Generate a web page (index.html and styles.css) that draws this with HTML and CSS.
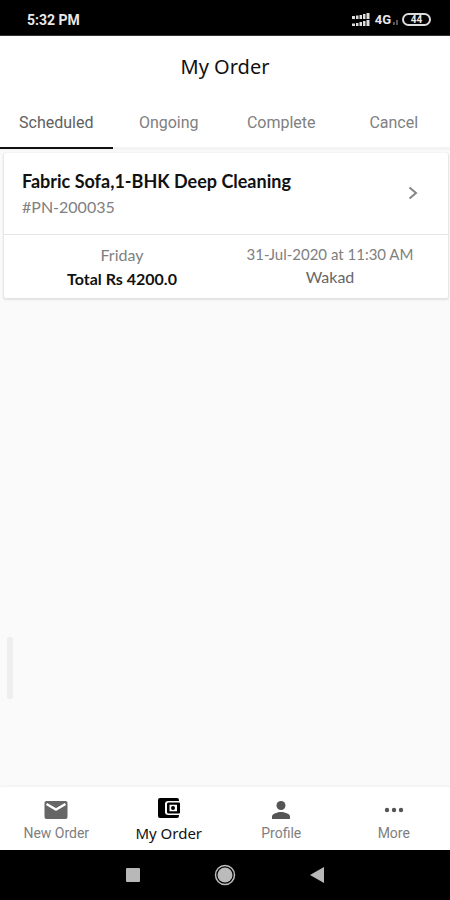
FILE: index.html
```html
<!DOCTYPE html>
<html lang="en">
<head>
<meta charset="utf-8">
<meta name="viewport" content="width=device-width, initial-scale=1">
<title>My Order</title>
<link rel="stylesheet" href="styles.css">
</head>
<body>
<div class="status">
  <span class="clock">5:32 PM</span>
  <div class="indicators">
    <svg class="signal" width="18" height="14" viewBox="0 0 18 14" fill="#ddd" aria-hidden="true">
      <path d="M0 3h3v3H0zM4 2.500h2.500v3.500H4zM7.500 2h2.500v4H7.500zM11 1h2.500v5H11zM14.500 0h3v6h-3zM0 10.500h3v2.500H0zM4 10h2.500v3H4zM7.500 9h2.500v4H7.500zM11 8h2.500v5H11zM14.500 7h3v6h-3z"/>
    </svg>
    <span class="network">4G</span>
    <svg class="dot" width="5" height="6" viewBox="0 0 5 6" fill="#555" aria-hidden="true"><path d="M0 3h2v3H0zM3 1h2v5H3z"/></svg>
    <span class="battery">44</span>
  </div>
</div>
<header class="header">
  <h1 class="title">My Order</h1>
  <nav class="tabs">
    <a class="tab tab-active" href="#scheduled">Scheduled</a>
    <a class="tab" href="#ongoing">Ongoing</a>
    <a class="tab" href="#complete">Complete</a>
    <a class="tab" href="#cancel">Cancel</a>
  </nav>
</header>
<main class="content">
  <article class="card">
    <a class="card-head" href="#order">
      <div>
        <h2 class="service">Fabric Sofa,1-BHK Deep Cleaning</h2>
        <p class="number">#PN-200035</p>
      </div>
      <svg width="10" height="16" viewBox="0 0 10 16" fill="none" stroke="#858585" stroke-width="2" aria-hidden="true"><path d="M1.500 1.500 8 7l-6.500 5.500"/></svg>
    </a>
    <div class="card-info">
      <div class="info">
        <p class="day">Friday</p>
        <p class="total">Total Rs 4200.0</p>
      </div>
      <div class="info">
        <p class="date">31-Jul-2020 at 11:30 AM</p>
        <p class="place">Wakad</p>
      </div>
    </div>
  </article>
  <span class="scroll-hint"></span>
</main>
<nav class="bottom">
  <a class="item" href="#new">
    <svg width="24" height="20" viewBox="0 0 24 20" aria-hidden="true"><rect x="0.500" y="1" width="23" height="18" rx="2" fill="#666"/><path d="M2.500 4 12 9.500 21.500 4" fill="none" stroke="#fff" stroke-width="2.400"/></svg>
    <span class="label">New Order</span>
  </a>
  <a class="item item-active" href="#orders">
    <svg width="24" height="20" viewBox="0 0 24 20" aria-hidden="true"><path fill="#000" d="M3 0h17q2 0 2 2v1H11.500Q8 3 8 6v8q0 3 3.500 3H22v1q0 2-2 2H3q-2 0-2-2V2q0-2 2-2z"/><path fill="#000" fill-rule="evenodd" d="M11.500 4.500H22q1 0 1 1v9q0 1-1 1H11.500q-1.500 0-1.500-1.500V6q0-1.500 1.500-1.500zM12.500 6.700v6.600h7.500V6.700z"/><circle cx="16" cy="10" r="2"/></svg>
    <span class="label">My Order</span>
  </a>
  <a class="item" href="#profile">
    <svg width="24" height="20" viewBox="0 0 24 20" fill="#555" aria-hidden="true"><circle cx="12" cy="5.500" r="4.500"/><path d="M3 19v-2.500c0-3 6-4.500 9-4.500s9 1.500 9 4.500V19z"/></svg>
    <span class="label">Profile</span>
  </a>
  <a class="item" href="#more">
    <svg width="24" height="20" viewBox="0 0 24 20" fill="#555" aria-hidden="true"><circle cx="5" cy="10" r="2.200"/><circle cx="12" cy="10" r="2.200"/><circle cx="19" cy="10" r="2.200"/></svg>
    <span class="label">More</span>
  </a>
</nav>
<div class="system">
  <button class="key" aria-label="Recent apps"><svg width="14" height="14" viewBox="0 0 14 14"><rect width="14" height="14" rx="1" fill="#b8b8b8"/></svg></button>
  <button class="key" aria-label="Home"><svg width="22" height="22" viewBox="0 0 22 22"><circle cx="11" cy="11" r="9.500" fill="none" stroke="#bbb" stroke-width="1.500"/><circle cx="11" cy="11" r="7.500" fill="#bbb"/></svg></button>
  <button class="key" aria-label="Back"><svg width="14" height="16" viewBox="0 0 14 16"><path d="M14 0v16L0 8z" fill="#b8b8b8"/></svg></button>
</div>
</body>
</html>
```
FILE: styles.css
```css
* { box-sizing: border-box; }
body {
  margin: 0;
  min-height: 100vh;
  display: flex;
  flex-direction: column;
  background: #fafafa;
  font-family: Roboto, sans-serif;
  color: #808080;
}
h1, h2, p { margin: 0; font-weight: 400; }
a { color: inherit; text-decoration: none; }

.status {
  height: 36px;
  padding: 4px 19px 0 27px;
  display: flex;
  align-items: center;
  justify-content: space-between;
  background: #000;
  color: #e8e8e8;
  border-bottom: 1px solid #333;
}
.clock { font-size: 14px; font-weight: 700; }
.indicators { display: flex; align-items: center; }
.network { margin-left: 5px; font-size: 13px; font-weight: 700; }
.dot { margin: 4px 4px 0 2px; }
.battery {
  width: 29px;
  height: 13px;
  border: 2px solid #ddd;
  border-radius: 7px;
  font-size: 10px;
  line-height: 9px;
  font-weight: 700;
  text-align: center;
}

.header { background: #fff; border-bottom: 3px solid #f3f3f3; }
.title {
  padding-top: 16px;
  font: 400 20px/30px "Noto Sans", sans-serif;
  color: #111;
  text-align: center;
}
.tabs { display: flex; margin: 15px 0 -2px; }
.tab {
  flex: 1;
  height: 52px;
  border-bottom: 2px solid transparent;
  font-size: 16px;
  line-height: 52px;
  text-align: center;
}
.tab-active { border-color: #111; color: #606060; }

.content { position: relative; flex: 1; padding: 3px 2px 0 4px; }
.card {
  background: #fff;
  border-radius: 2px;
  box-shadow: 0 1px 2px 1px #e2e2e2;
}
.card-head {
  display: flex;
  align-items: center;
  justify-content: space-between;
  height: 82px;
  padding: 0 30px 0 18px;
  border-bottom: 1px solid #e6e6e6;
}
.service { font: 700 18px/26px Lato, sans-serif; color: #111; }
.number { font: 400 16px/26px Lato, sans-serif; }
.card-info { display: flex; padding: 8px 14px 7px; }
.info { flex: 1; text-align: center; }
.info p { font: 400 16px/24px Lato, sans-serif; }
.info .total { font-weight: 700; color: #111; }
.info .date { font-size: 15px; line-height: 22px; }
.info .place { color: #666; }
.scroll-hint {
  position: absolute;
  left: 7px;
  bottom: 88px;
  width: 6px;
  height: 62px;
  border-radius: 2px;
  background: #eee;
}

.bottom {
  display: flex;
  height: 63px;
  background: #fff;
  box-shadow: 0 -1px 2px #f0f0f0;
}
.item {
  flex: 1;
  padding-top: 13px;
  display: flex;
  flex-direction: column;
  align-items: center;
  font-size: 14px;
  line-height: 26px;
}
.item-active {
  padding-top: 11px;
  font-family: "Noto Sans", sans-serif;
  font-size: 15px;
  line-height: 30px;
  color: #111;
}

.system {
  height: 50px;
  display: flex;
  justify-content: center;
  align-items: center;
  gap: 32px;
  background: #000;
}
.key {
  width: 60px;
  height: 40px;
  padding: 0;
  border: 0;
  display: flex;
  align-items: center;
  justify-content: center;
  background: none;
}
```
